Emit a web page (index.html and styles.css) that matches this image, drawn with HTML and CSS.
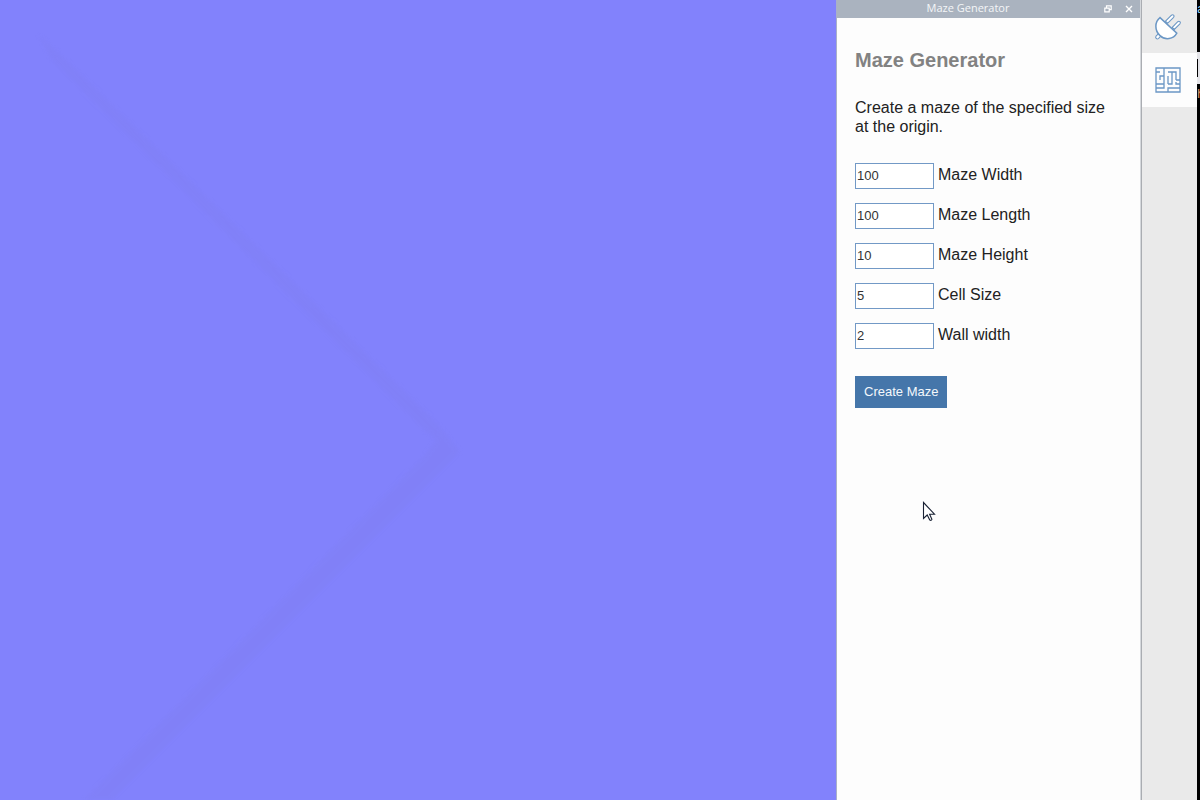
FILE: index.html
```html
<!DOCTYPE html>
<html lang="en">
<head>
<meta charset="utf-8">
<title>Maze Generator</title>
<link rel="stylesheet" href="styles.css">
</head>
<body>
<div class="app">
  <main class="viewport" aria-label="3D viewport">
    <svg class="ground" width="836" height="800" viewBox="0 0 836 800" aria-hidden="true">
      <path d="M38 34L60 54L438 424L460 452L112 800H84L424 456L436 440L424 430L52 60Z"/>
    </svg>
  </main>

  <section class="panel">
    <header class="titlebar">
      <span class="titlebar-text">Maze Generator</span>
      <button class="titlebar-button" type="button" aria-label="Float panel">
        <svg width="8" height="8" viewBox="0 0 8 8"><path d="M2.5 3V.8h4.7v3.9H5.5M.8 3.2h4.4v3.7H.8z" fill="none" stroke="#fff" stroke-width="1.2"/></svg>
      </button>
      <button class="titlebar-button" type="button" aria-label="Close panel">
        <svg width="8" height="8" viewBox="0 0 8 8"><path d="M1 1l6 6M7 1L1 7" stroke="#fff" stroke-width="1.4"/></svg>
      </button>
    </header>
    <form class="content">
      <h1 class="heading">Maze Generator</h1>
      <p class="intro">Create a maze of the specified size at the origin.</p>
      <div class="fields">
        <div class="field"><input class="field-input" id="width" type="text" value="100"><label class="field-label" for="width">Maze Width</label></div>
        <div class="field"><input class="field-input" id="length" type="text" value="100"><label class="field-label" for="length">Maze Length</label></div>
        <div class="field"><input class="field-input" id="height" type="text" value="10"><label class="field-label" for="height">Maze Height</label></div>
        <div class="field"><input class="field-input" id="cell" type="text" value="5"><label class="field-label" for="cell">Cell Size</label></div>
        <div class="field"><input class="field-input" id="wall" type="text" value="2"><label class="field-label" for="wall">Wall width</label></div>
      </div>
      <button class="create" type="button">Create Maze</button>
    </form>
  </section>

  <nav class="tabs" aria-label="Plugins">
    <button class="tab" type="button" aria-label="Plugin manager">
      <svg width="28" height="28" viewBox="0 0 28 28" fill="#fff" stroke="#6b97c5" stroke-width="1.1">
        <path d="M11.5 8.2l6-6q1.1-.9 2.1 0t0 2.1l-6 6zM18.2 14.4l5.6-5.7q1.1-.9 2.1 0t0 2.1l-5.6 5.7z"/>
        <path d="M2 23.2l3-3 2.4 2.4-3 3q-1.2.8-2.2-.2t-.2-2.2z"/>
        <path d="M6 4.6L22.8 20.2C19.4 26.4 11.2 27.6 6 22.6C.6 17.6.4 9 6 4.6Z" stroke-width="1.5"/>
      </svg>
    </button>
    <button class="tab tab-active" type="button" aria-label="Maze Generator">
      <svg width="28" height="28" viewBox="0 0 28 28" fill="none" stroke="#6b97c5" stroke-width="1.3">
        <path d="M2 2h24v24H2z"/>
        <path d="M2 6h4M10 2v8H6v4M2 18h4M10 14v4H6M10 14v-4M2 22h8v-4M14 10v8M14 6h8v4M18 6v12h-4M26 14h-4M22 10v4M26 18h-4v-2M26 22h-8M14 26v-4h4"/>
      </svg>
    </button>
  </nav>

  <aside class="behind">
    <span class="sliver sliver-top">a</span>
    <span class="sliver sliver-light"></span>
    <span class="sliver sliver-low">h</span>
  </aside>
</div>
<svg class="cursor" width="14" height="22" viewBox="0 0 14 22" aria-hidden="true"><path d="M1.5 1.5v16l3.7-3.5 2.6 5.1q1.6.8 2.1-.7L7.6 13.2h4.9z" fill="#fff" stroke="#182033" stroke-width="1.1"/></svg>
</body>
</html>
```
FILE: styles.css
```css
* { box-sizing: border-box; }
body {
  margin: 0;
  font-family: "Liberation Sans", Arial, sans-serif;
  color: #222;
}
button { border: 0; padding: 0; font-family: inherit; }
svg { display: block; }
.app {
  display: grid;
  grid-template-columns: minmax(0, 1fr) 305px 56px 3px;
  min-height: 100vh;
  background: #fdfdfd;
}
.viewport { background: #8282fc; overflow: hidden; }
.ground { fill: #8180f5; opacity: .6; filter: blur(2px); }
.panel {
  border-left: 1px solid #a9b0c8;
  border-right: 1px solid #d5d8dc;
}
.titlebar {
  display: flex;
  align-items: center;
  height: 18px;
  padding-right: 6px;
  gap: 10px;
  background: #aab3bf;
  color: #f4f6f8;
}
.titlebar-text {
  flex: 1;
  text-align: center;
  font: 11px/14px "Open Sans", "Noto Sans", sans-serif;
  padding: 0 0 3px 7px;
}
.titlebar-button {
  display: grid;
  place-items: center;
  width: 11px;
  height: 16px;
  background: none;
}
.content { padding: 30px 18px; }
.heading {
  margin: 0;
  font-size: 20px;
  line-height: 24px;
  color: #828282;
}
.intro {
  margin: 26px 0 27px;
  font-size: 16px;
  line-height: 19px;
}
.fields { display: grid; gap: 14px; }
.field { display: flex; align-items: center; gap: 4px; }
.field-input {
  width: 79px;
  height: 26px;
  padding: 0 1px 2px;
  border: 1px solid #7299c6;
  background: #fff;
  font: 13px/16px "Liberation Sans", Arial, sans-serif;
  color: #333;
}
.field-label { font-size: 16px; line-height: 20px; padding-bottom: 3px; }
.create {
  margin-top: 27px;
  padding: 8px 9px;
  background: #4576aa;
  color: #f4f8fc;
  font-size: 13px;
  line-height: 16px;
}
.tabs {
  display: flex;
  flex-direction: column;
  border-left: 1px solid #aaadb2;
  background: #eaeaea;
}
.tab {
  display: grid;
  place-items: center;
  height: 53px;
  padding-right: 3px;
  background: none;
}
.tab-active { height: 54px; background: #fdfdfd; }
.behind {
  display: flex;
  flex-direction: column;
  overflow: hidden;
  background: #000;
  font: 12px/16px "Liberation Mono", monospace;
}
.sliver { overflow: hidden; }
.sliver-top { height: 52px; padding-top: 2px; color: #9cdcfe; }
.sliver-light { height: 32px; background: linear-gradient(#000, #000) 0 50% / 1px 18px no-repeat #e4e4e8; }
.sliver-low { padding-top: 3px; color: #e8a070; }
.cursor { position: absolute; left: 922px; top: 501px; }
```
